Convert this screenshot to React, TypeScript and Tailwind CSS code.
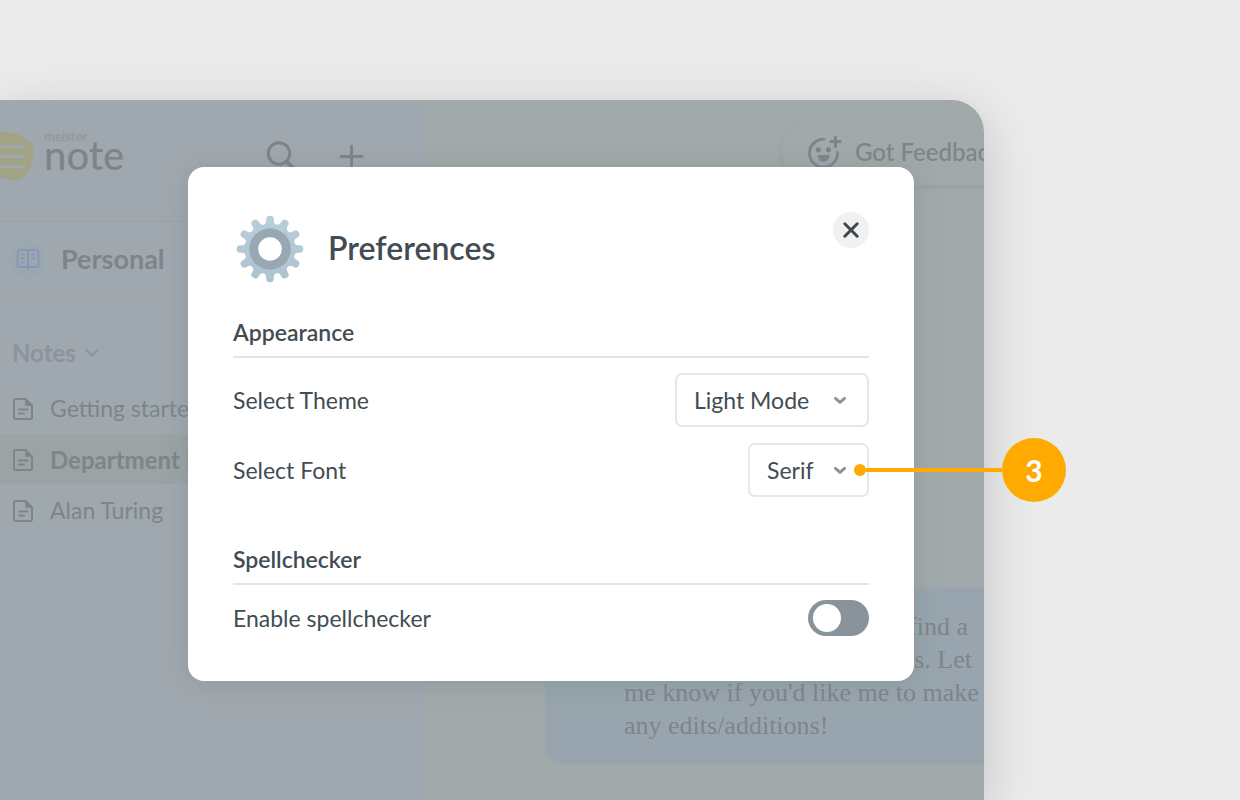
import React, { useState } from 'react';

const teeth = [0, 30, 60, 90, 120, 150, 180, 210, 240, 270, 300, 330];

function GearIcon() {
  return (
    <svg viewBox="0 0 68 68" className="h-[68px] w-[68px]" aria-hidden="true">
      <defs>
        <linearGradient id="gear" gradientUnits="userSpaceOnUse" x1="0" y1="0" x2="0" y2="68">
          <stop offset="0" stopColor="#b9cedb" />
          <stop offset="1" stopColor="#aec2ce" />
        </linearGradient>
      </defs>
      <mask id="teeth">
        <circle cx="34" cy="34" r="25.3" fill="#fff" />
        {teeth.map((a) => (
          <path
            key={a}
            d="M26.5 10.5 Q30.2 9 30.2 6 V4.2 Q30.2 0.7 34 0.7 Q37.8 0.7 37.8 4.2 V6 Q37.8 9 41.5 10.5Z"
            transform={`rotate(${a} 34 34)`}
            fill="#fff"
          />
        ))}
      </mask>
      <rect width="68" height="68" fill="url(#gear)" mask="url(#teeth)" />
      <circle cx="34" cy="34" r="20.7" fill="#98a8b3" />
      <circle cx="34" cy="34" r="11.8" fill="#fff" />
    </svg>
  );
}

function LogoMark() {
  return (
    <svg viewBox="0 0 34 50" className="h-[50px] w-[34px]" aria-hidden="true">
      <path d="M0 1 C9 0 20 3 28 9 C33 13 34.500 18 33.500 25 C32.500 34 28 44 21 48 C15 51 7 48 0 46Z" fill="#a2a285" />
      <path d="M0 15.500H23.500M0 25.500H23.500M0 35.500H23.500" stroke="#a0a8af" strokeWidth="2.800" strokeLinecap="round" />
    </svg>
  );
}

function NoteIcon() {
  return (
    <svg viewBox="0 0 22 24" className="h-[24px] w-[22px] shrink-0" fill="none" stroke="#7d8589" strokeWidth="2" strokeLinecap="round" strokeLinejoin="round" aria-hidden="true">
      <path d="M4 2H13.500L20 8.500V20a2 2 0 0 1-2 2H4a2 2 0 0 1-2-2V4a2 2 0 0 1 2-2Z" />
      <path d="M13.800 2.500V8.300H19.600Z" fill="#7d8589" strokeWidth="1" />
      <path d="M7 12.500H15.500M7 16.500H12" />
    </svg>
  );
}

function BookIcon() {
  return (
    <svg viewBox="0 0 24 22" className="h-[22px] w-[24px]" fill="none" stroke="#8795b9" strokeWidth="2" strokeLinecap="round" strokeLinejoin="round" aria-hidden="true">
      <path d="M12 3.500Q11.500 2 9.500 2H4.500Q1.500 2 1.500 5V16Q1.500 19 4.500 19H10Q12 19 12 20.500V3.500Q12.500 2 14.500 2H19.500Q22.500 2 22.500 5V16Q22.500 19 19.500 19H14Q12 19 12 20.500" />
      <path d="M5.700 6.500H8M5.700 10.500H8M5.700 14.500H8M16 6.500H18.300M16 10.500H18.300" strokeWidth="1.800" />
    </svg>
  );
}

function FeedbackIcon() {
  return (
    <svg viewBox="0 0 36 36" className="h-[36px] w-[36px] shrink-0" fill="none" stroke="#7d8589" strokeWidth="2.800" strokeLinecap="round" aria-hidden="true">
      <path d="M17 5.200A14 14 0 1 0 30.500 18.300" />
      <path d="M28.500 3V12.500M23.800 7.500H33.200" strokeWidth="3" />
      <circle cx="11.300" cy="15.700" r="2.600" fill="#7d8589" stroke="none" />
      <circle cx="21.500" cy="15.700" r="2.600" fill="#7d8589" stroke="none" />
      <path d="M11.500 21H21.500Q23 21 22.500 22.500Q20.700 27.800 16.500 27.800Q12.300 27.800 10.500 22.500Q10 21 11.500 21Z" fill="#7d8589" stroke="none" />
    </svg>
  );
}

const notes = [
  { title: 'Getting started', active: false },
  { title: 'Department Notes', active: true },
  { title: 'Alan Turing', active: false },
];

function Sidebar() {
  return (
    <aside className="w-[424px] shrink-0 bg-[#a0a8af] text-[#7d8589]">
      <header className="flex h-[122px] items-start border-b border-[#9aa2a6] pt-[31px]">
        <LogoMark />
        <div className="ml-[10px] w-[212px]">
          <div className="h-[11px] text-[13px] leading-[11px] font-bold text-[#92999d]">meister</div>
          <div className="text-[40px] leading-[26px] font-medium">note</div>
        </div>
        <button aria-label="Search" className="mt-[9px] ml-[9px]">
          <svg viewBox="0 0 32 32" className="h-[32px] w-[32px]" fill="none" stroke="#7d8589" strokeWidth="3" strokeLinecap="round">
            <circle cx="14" cy="13.500" r="10.700" />
            <path d="M22 22L29 29" strokeWidth="4" />
          </svg>
        </button>
        <button aria-label="Add note" className="mt-[13px] ml-[42px]">
          <svg viewBox="0 0 26 26" className="h-[26px] w-[26px]" fill="none" stroke="#7d8589" strokeWidth="3" strokeLinecap="round">
            <path d="M12.500 2V23M2 12.500H23" />
          </svg>
        </button>
      </header>
      <div className="flex h-[75px] items-center border-b border-[#9da5a8] pl-[9px]">
        <span className="flex h-[37px] w-[37px] items-center justify-center rounded-full bg-[#9ba7ae]">
          <BookIcon />
        </span>
        <span className="ml-[15px] text-[27px] leading-[32px] font-bold">Personal</span>
      </div>
      <button className="mt-[40px] ml-[12px] flex h-[32px] items-center gap-[9px] text-[24px] font-bold text-[#8c949b]">
        Notes
        <svg viewBox="0 0 14 10" className="h-[10px] w-[14px]" fill="none" stroke="#8c949b" strokeWidth="2" strokeLinecap="round" strokeLinejoin="round" aria-hidden="true">
          <path d="M1.500 2L7 7.500L12.500 2" />
        </svg>
      </button>
      <ul className="mt-[15px] flex flex-col gap-[2px]">
        {notes.map((n) => (
          <li key={n.title} className={n.active ? 'bg-[#9ba3a5] text-[24px] font-bold' : 'text-[23px]'}>
            <a href="#" className="flex h-[49px] items-center gap-[16px] pl-[12px] whitespace-nowrap">
              <NoteIcon />
              {n.title}
            </a>
          </li>
        ))}
      </ul>
    </aside>
  );
}

function Content() {
  return (
    <section className="flex min-w-0 flex-1 flex-col bg-[#a1a9ab] text-[#7d8589]">
      <div className="flex justify-end pt-[18px]">
        <button className="flex h-[67px] w-[202px] items-center gap-[12px] rounded-l-full pl-[25px] text-[24px] font-medium whitespace-nowrap shadow-[0_2px_5px_rgba(80,90,95,0.1)]">
          <FeedbackIcon />
          Got Feedback?
        </button>
      </div>
      <div className="mt-[403px] ml-[121px] rounded-l-[16px] bg-[#98a5ae] py-[22px] pl-[79px] font-['Liberation_Serif',serif] text-[26px] leading-[33px] whitespace-nowrap">
        <p className="w-[344px] text-right">I could find a</p>
        <p className="w-[348px] text-right">sources. Let</p>
        <p>me know if you'd like me to make</p>
        <p>any edits/additions!</p>
      </div>
    </section>
  );
}

function SelectBox({ id, options, className }: { id: string; options: string[]; className: string }) {
  return (
    <div className="relative">
      <select id={id} className={`h-[54px] appearance-none rounded-[7px] border-2 border-[#e3e8eb] bg-white pl-[17px] text-[23px] text-[#414c53] outline-none ${className}`}>
        {options.map((o) => (
          <option key={o}>{o}</option>
        ))}
      </select>
      <svg viewBox="0 0 14 10" className="pointer-events-none absolute top-[22px] right-[22px] h-[10px] w-[14px]" fill="none" stroke="#8b949a" strokeWidth="3" strokeLinecap="round" strokeLinejoin="round" aria-hidden="true">
        <path d="M2.500 3.300L7 7.300L11.500 3.300" />
      </svg>
    </div>
  );
}

function Preferences() {
  const [spell, setSpell] = useState(false);
  return (
    <div role="dialog" aria-labelledby="prefs-title" className="absolute top-[67px] right-[70px] left-[188px] rounded-[16px] bg-white p-[45px] text-[23px] leading-[32px] text-[#414c53] shadow-[0_2px_24px_rgba(110,125,120,0.35)]">
      <div className="flex items-start">
        <div className="mt-[3px] ml-[3px]">
          <GearIcon />
        </div>
        <h1 id="prefs-title" className="mt-[16px] ml-[24px] flex-1 text-[32px] leading-[40px] font-semibold">
          Preferences
        </h1>
        <button aria-label="Close" className="flex h-[36px] w-[36px] items-center justify-center rounded-full bg-[#f1f1f1]">
          <svg viewBox="0 0 18 18" className="h-[18px] w-[18px]" fill="none" stroke="#3c474f" strokeWidth="3" strokeLinecap="round">
            <path d="M2.800 2.800L15.200 15.200M15.200 2.800L2.800 15.200" />
          </svg>
        </button>
      </div>

      <h2 className="mt-[33px] border-b-2 border-[#dfe5e9] pb-[8px] font-semibold">Appearance</h2>
      <div className="mt-[15px] flex items-center justify-between">
        <label htmlFor="theme">Select Theme</label>
        <SelectBox id="theme" options={['Light Mode', 'Dark Mode']} className="w-[194px]" />
      </div>
      <div className="mt-[16px] flex items-center justify-between">
        <label htmlFor="font">Select Font</label>
        <div className="relative">
          <SelectBox id="font" options={['Serif', 'Sans']} className="w-[121px]" />
          <div className="pointer-events-none absolute top-[-5px] left-[106px] flex items-center">
            <span className="h-[12px] w-[12px] rounded-full bg-[#ffaa00]" />
            <span className="h-[4px] w-[136px] bg-[#ffaa00]" />
            <span className="flex h-[64px] w-[64px] items-center justify-center rounded-full bg-[#ffaa00] text-[30px] font-bold text-white">3</span>
          </div>
        </div>
      </div>

      <h2 className="mt-[46px] border-b-2 border-[#dfe5e9] pb-[8px] font-semibold">Spellchecker</h2>
      <div className="mt-[15px] flex items-center justify-between">
        <label htmlFor="spell">Enable spellchecker</label>
        <input
          id="spell"
          type="checkbox"
          role="switch"
          checked={spell}
          onChange={(e) => setSpell(e.target.checked)}
          className="h-[36px] w-[61px] appearance-none rounded-full bg-[#8a9399] px-[5px] py-[4px] before:block before:h-[28px] before:w-[28px] before:rounded-full before:bg-white checked:before:ml-auto"
        />
      </div>
    </div>
  );
}

export default function App() {
  return (
    <main className="flex h-screen overflow-hidden bg-[#ebebeb] pt-[100px] pr-[256px] font-['Lato','Noto_Sans',sans-serif]">
      <div className="relative min-w-0 flex-1">
        <div className="flex h-full overflow-hidden rounded-tr-[32px] shadow-[0_14px_52px_rgba(0,0,0,0.18)]">
          <Sidebar />
          <Content />
        </div>
        <Preferences />
      </div>
    </main>
  );
}
